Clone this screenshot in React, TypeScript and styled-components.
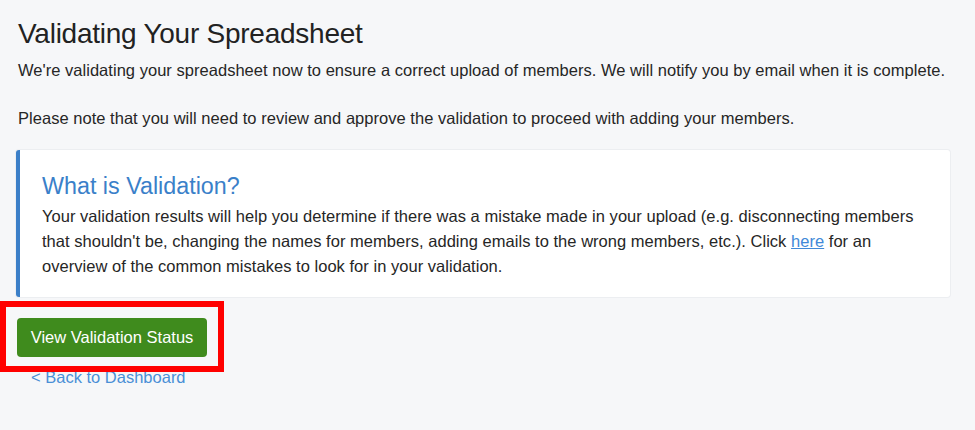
import React from "react";
import styled, { createGlobalStyle } from "styled-components";

const Global = createGlobalStyle`
  html, body { margin: 0; padding: 0; background: #f6f7f9; }
  body { font-family: "Liberation Sans", Arial, sans-serif; color: #2b2b2b; }
`;

const Page = styled.div`
  position: relative;
  width: 975px;
  height: 430px;
  box-sizing: border-box;
  padding: 14px 25px 0 18px;
  overflow: hidden;
`;

const Title = styled.h1`
  margin: 0 0 4px;
  font-size: 28px;
  font-weight: 400;
  line-height: 40px;
  color: #222;
  letter-spacing: -0.25px;
`;

const Text = styled.p<{ $gap: number }>`
  margin: 0 0 ${(p) => p.$gap}px;
  font-size: 16.5px;
  letter-spacing: 0.03px;
  line-height: 24px;
  color: #262626;
`;

const Card = styled.section`
  margin: 0 0 21px -2px;
  background: #fff;
  border-left: 4px solid #3b7fc8;
  border-radius: 3px;
  box-shadow: 0 0 0 1px #eceef1;
  padding: 22px 22px 18px 22px;
`;

const CardTitle = styled.h2`
  margin: 0 0 4px;
  font-size: 23.3px;
  font-weight: 400;
  line-height: 28px;
  color: #3a80c9;
`;

const CardText = styled.p`
  margin: 0;
  font-size: 16.5px;
  letter-spacing: 0.03px;
  line-height: 25px;
  color: #262626;
`;

const Link = styled.a`
  color: #4189d8;
  text-decoration: underline;
`;

const Actions = styled.div`
  display: flex;
  flex-direction: column;
  align-items: flex-start;
  gap: 8px;
`;

const Button = styled.button`
  width: 190px;
  height: 39px;
  margin-left: -1px;
  border: none;
  border-radius: 4px;
  background: #3f8b1d;
  color: #fff;
  font-family: inherit;
  font-size: 16.5px;
  cursor: pointer;
`;

const BackLink = styled.a`
  margin-left: 13px;
  font-size: 16.5px;
  line-height: 24px;
  color: #4a8fd6;
  text-decoration: none;
`;

const Highlight = styled.div`
  position: absolute;
  left: 0;
  top: 301px;
  width: 224px;
  height: 71px;
  box-sizing: border-box;
  border: 6px solid #ff0000;
  pointer-events: none;
`;

export default function App() {
  return (
    <>
      <Global />
      <Page>
        <Title>Validating Your Spreadsheet</Title>
        <Text $gap={24}>
          We're validating your spreadsheet now to ensure a correct upload of members. We will notify you by email when it is complete.
        </Text>
        <Text $gap={20}>
          Please note that you will need to review and approve the validation to proceed with adding your members.
        </Text>
        <Card>
          <CardTitle>What is Validation?</CardTitle>
          <CardText>
            Your validation results will help you determine if there was a mistake made in your upload (e.g. disconnecting members
            that shouldn't be, changing the names for members, adding emails to the wrong members, etc.). Click{" "}
            <Link href="#">here</Link> for an overview of the common mistakes to look for in your validation.
          </CardText>
        </Card>
        <Actions>
          <Button>View Validation Status</Button>
          <BackLink href="#">&lt; Back to Dashboard</BackLink>
        </Actions>
        <Highlight />
      </Page>
    </>
  );
}
